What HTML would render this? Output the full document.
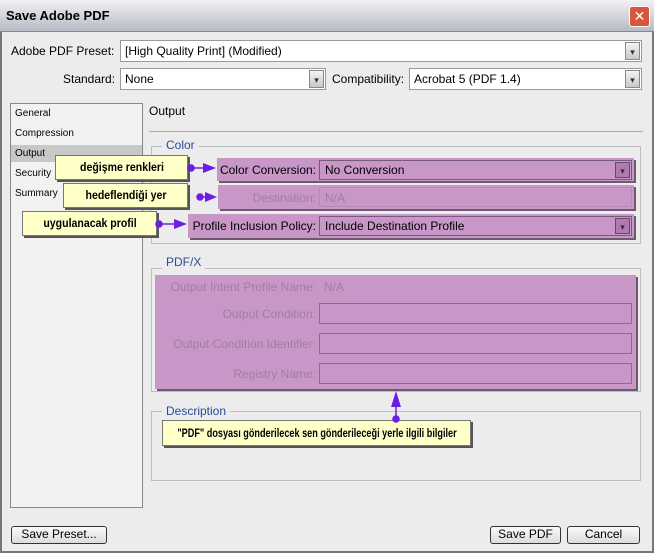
<!DOCTYPE html>
<html><head><meta charset="utf-8"><style>
*{margin:0;padding:0;box-sizing:border-box}
body{width:654px;height:553px;background:#ececec;font-family:"Liberation Sans","DejaVu Sans",sans-serif;font-size:12px;color:#000;position:relative;overflow:hidden}
.a{position:absolute}
.t{position:absolute;white-space:nowrap}
.r{position:absolute;white-space:nowrap;text-align:right;width:200px;font-size:12px}
.sel{position:absolute;background:#fff;border:1px solid #9a9a9a}
.dd{position:absolute;right:1px;top:1px;bottom:1px;width:15px;background:linear-gradient(#f4f4f4,#c8c8c8);border:1px solid #8a8a8a;font-size:9px;text-align:center;color:#333;line-height:18px}
.pu{position:absolute;background:#c897c8;box-shadow:2px 2px 0 #6e5a6e}
.fs{position:absolute;border:1px solid #bdbdbd}
.lg{position:absolute;background:#ececec;color:#2a4a9a;padding:0 4px;font-size:12px}
.cb{position:absolute;background:#ffffc8;border:1px solid #777;box-shadow:2px 2px 0 #555;font-weight:bold;font-size:12px;white-space:nowrap}
.cb span{position:absolute;left:50%;top:0;transform:translateX(-50%) scaleX(0.88)}
.btn{position:absolute;border:1px solid #333;border-radius:3px;background:linear-gradient(#fafafa,#dcdcdc);text-align:center;font-size:12px;line-height:15px}
.dis{color:#a17ea1}
</style></head><body>
<div class="a" style="left:0;top:0;width:654px;height:32px;background:linear-gradient(#f2f2f4,#b8bac4);border-bottom:1px solid #888"></div>
<div class="t" style="left:6px;top:8px;font-weight:bold;font-size:13px">Save Adobe PDF</div>
<div class="a" style="left:629px;top:6px;width:21px;height:21px;background:#d9553b;border:1px solid #fff;border-radius:3px;color:#fff;text-align:center;font-weight:bold;line-height:19px;font-size:14px">✕</div>
<div class="a" style="left:0;top:32px;width:2px;height:521px;background:#777"></div>
<div class="a" style="left:652px;top:32px;width:2px;height:521px;background:#777"></div>
<div class="a" style="left:0;top:551px;width:654px;height:2px;background:#777"></div>

<div class="t" style="left:11px;top:44px">Adobe PDF Preset:</div>
<div class="sel" style="left:120px;top:40px;width:522px;height:22px"><span class="t" style="left:4px;top:3px">[High Quality Print] (Modified)</span><div class="dd">▾</div></div>
<div class="t" style="left:63px;top:72px">Standard:</div>
<div class="sel" style="left:120px;top:68px;width:206px;height:22px"><span class="t" style="left:4px;top:3px">None</span><div class="dd">▾</div></div>
<div class="t" style="left:332px;top:72px">Compatibility:</div>
<div class="sel" style="left:409px;top:68px;width:233px;height:22px"><span class="t" style="left:4px;top:3px">Acrobat 5 (PDF 1.4)</span><div class="dd">▾</div></div>

<div class="a" style="left:10px;top:103px;width:133px;height:405px;background:#f2f2f2;border:1px solid #888"></div>
<div class="a" style="left:11px;top:145px;width:131px;height:17px;background:#c8c8c8"></div>
<div class="t" style="left:15px;top:108px;font-size:10px">General</div>
<div class="t" style="left:15px;top:128px;font-size:10px">Compression</div>
<div class="t" style="left:15px;top:148px;font-size:10px">Output</div>
<div class="t" style="left:15px;top:168px;font-size:10px">Security</div>
<div class="t" style="left:15px;top:188px;font-size:10px">Summary</div>

<div class="t" style="left:149px;top:104px">Output</div>
<div class="a" style="left:149px;top:131px;width:494px;height:1px;background:#aaa"></div>

<div class="fs" style="left:151px;top:146px;width:490px;height:98px"></div>
<div class="lg" style="left:162px;top:138px">Color</div>
<div class="fs" style="left:151px;top:268px;width:490px;height:124px"></div>
<div class="lg" style="left:162px;top:255px">PDF/X</div>
<div class="fs" style="left:151px;top:411px;width:490px;height:70px"></div>
<div class="lg" style="left:162px;top:404px">Description</div>

<div class="pu" style="left:217px;top:158px;width:417px;height:23px"></div>
<div class="r" style="left:116px;top:163px">Color Conversion:</div>
<div class="sel" style="left:319px;top:160px;width:313px;height:20px;background:#c897c8;border-color:#7a5a7a"><span class="t" style="left:5px;top:2px">No Conversion</span><div class="dd" style="background:#b07ab0;border-color:#6a4a6a;line-height:16px">▾</div></div>
<div class="pu" style="left:218px;top:185px;width:416px;height:24px"></div>
<div class="r dis" style="left:116px;top:191px">Destination:</div>
<div class="sel" style="left:319px;top:187px;width:313px;height:20px;background:#c897c8;border-color:#b58ab5"><span class="t dis" style="left:5px;top:3px">N/A</span></div>
<div class="pu" style="left:188px;top:214px;width:446px;height:24px"></div>
<div class="r" style="left:116px;top:219px">Profile Inclusion Policy:</div>
<div class="sel" style="left:319px;top:216px;width:313px;height:20px;background:#c897c8;border-color:#7a5a7a"><span class="t" style="left:5px;top:2px">Include Destination Profile</span><div class="dd" style="background:#b07ab0;border-color:#6a4a6a;line-height:16px">▾</div></div>

<div class="pu" style="left:155px;top:275px;width:481px;height:114px"></div>
<div class="r dis" style="left:116px;top:280px">Output Intent Profile Name:</div>
<div class="t dis" style="left:324px;top:280px">N/A</div>
<div class="r dis" style="left:116px;top:307px">Output Condition:</div>
<div class="a" style="left:319px;top:303px;width:313px;height:21px;border:1px solid #8e6a8e"></div>
<div class="r dis" style="left:116px;top:337px">Output Condition Identifier:</div>
<div class="a" style="left:319px;top:333px;width:313px;height:21px;border:1px solid #8e6a8e"></div>
<div class="r dis" style="left:116px;top:367px">Registry Name:</div>
<div class="a" style="left:319px;top:363px;width:313px;height:21px;border:1px solid #8e6a8e"></div>

<div class="cb" style="left:55px;top:155px;width:133px;height:25px;line-height:23px"><span>değişme renkleri</span></div>
<div class="cb" style="left:63px;top:183px;width:125px;height:25px;line-height:23px"><span>hedeflendiği yer</span></div>
<div class="cb" style="left:22px;top:211px;width:135px;height:25px;line-height:23px"><span>uygulanacak profil</span></div>
<div class="cb" style="left:162px;top:420px;width:309px;height:26px;line-height:24px"><span style="transform:translateX(-50%) scaleX(0.76)">"PDF" dosyası gönderilecek sen gönderileceği yerle ilgili bilgiler</span></div>

<svg class="a" style="left:0;top:0" width="654" height="553">
<g fill="#6a1ee0" stroke="#6a1ee0" stroke-width="1.5">
<circle cx="191" cy="168" r="3"/><line x1="191" y1="168" x2="205" y2="168"/><polygon points="203,163 216,168 203,173" stroke="none"/>
<circle cx="200" cy="197" r="3"/><line x1="200" y1="197" x2="207" y2="197"/><polygon points="205,192 217,197 205,202" stroke="none"/>
<circle cx="159" cy="224" r="3"/><line x1="159" y1="224" x2="176" y2="224"/><polygon points="174,219 187,224 174,229" stroke="none"/>
<circle cx="396" cy="419" r="3"/><line x1="396" y1="419" x2="396" y2="405"/><polygon points="391,407 396,391 401,407" stroke="none"/>
</g></svg>

<div class="btn" style="left:11px;top:526px;width:96px;height:18px">Save Preset...</div>
<div class="btn" style="left:490px;top:526px;width:71px;height:18px">Save PDF</div>
<div class="btn" style="left:567px;top:526px;width:73px;height:18px">Cancel</div>
</body></html>
